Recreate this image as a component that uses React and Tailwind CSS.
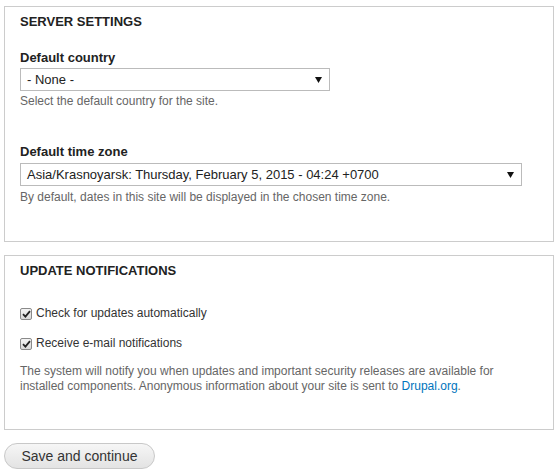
import React from 'react';

const font = { fontFamily: '"Liberation Sans", Arial, sans-serif' };

const Arrow = () => (
  <svg width="7" height="6" viewBox="0 0 7 6" className="shrink-0">
    <polygon points="0,0 7,0 3.5,6" fill="#111" />
  </svg>
);

const SelectBox = ({ value, width }) => (
  <div
    className={`flex items-center justify-between h-[23px] border border-[#bbb] bg-white pl-[6px] pr-[7px] text-[13px] text-[#222] ${width}`}
  >
    <span className="leading-none">{value}</span>
    <Arrow />
  </div>
);

const Check = ({ label }) => (
  <div className="flex items-center gap-[4px] h-[15px]">
    <span className="w-[12px] h-[12px] rounded-[2px] border border-[#8a8a8a] bg-gradient-to-b from-[#f4f4f4] to-[#d8d8d8] flex items-center justify-center">
      <svg width="9" height="8" viewBox="0 0 9 8">
        <path d="M1 4.2 L3.4 6.6 L8 1.2" stroke="#222" strokeWidth="1.8" fill="none" />
      </svg>
    </span>
    <span className="text-[12px] leading-[15px] text-[#333]">{label}</span>
  </div>
);

const Fieldset = ({ title, children }) => (
  <div className="w-[550px] border border-[#ccc] bg-white pt-[7px] px-[15px]">
    <h2 className="text-[13px] leading-[16px] font-bold text-[#222] uppercase">{title}</h2>
    {children}
  </div>
);

export default function App() {
  return (
    <div className="bg-white w-[560px] h-[472px] pl-[4px] pt-[6px]" style={font}>
      <Fieldset title="Server settings">
        <div className="mt-[20px]">
          <label className="block text-[13px] leading-[16px] font-bold text-[#222]">Default country</label>
          <div className="mt-[2px]">
            <SelectBox value="- None -" width="w-[310px]" />
          </div>
          <p className="mt-[3px] text-[12px] leading-[15px] text-[#666]">Select the default country for the site.</p>
        </div>
        <div className="mt-[35px] pb-[36px]">
          <label className="block text-[13px] leading-[16px] font-bold text-[#222]">Default time zone</label>
          <div className="mt-[3px]">
            <SelectBox value="Asia/Krasnoyarsk: Thursday, February 5, 2015 - 04:24 +0700" width="w-[502px]" />
          </div>
          <p className="mt-[4px] text-[12px] leading-[15px] text-[#666]">
            By default, dates in this site will be displayed in the chosen time zone.
          </p>
        </div>
      </Fieldset>

      <div className="mt-[13px]">
        <Fieldset title="Update notifications">
          <div className="mt-[27px] flex flex-col gap-[15px]">
            <Check label="Check for updates automatically" />
            <Check label="Receive e-mail notifications" />
          </div>
          <p className="mt-[13px] pb-[35px] text-[12px] leading-[15px] text-[#666] w-[505px]">
            The system will notify you when updates and important security releases are available for installed
            components. Anonymous information about your site is sent to{' '}
            <a href="#" className="text-[#0074bd]">Drupal.org</a>.
          </p>
        </Fieldset>
      </div>

      <button className="mt-[13px] h-[26px] w-[151px] rounded-full border border-[#c8c8c8] bg-gradient-to-b from-[#f6f6f6] to-[#e3e3e3] text-[14px] text-[#333] flex items-center justify-center">
        Save and continue
      </button>
    </div>
  );
}
